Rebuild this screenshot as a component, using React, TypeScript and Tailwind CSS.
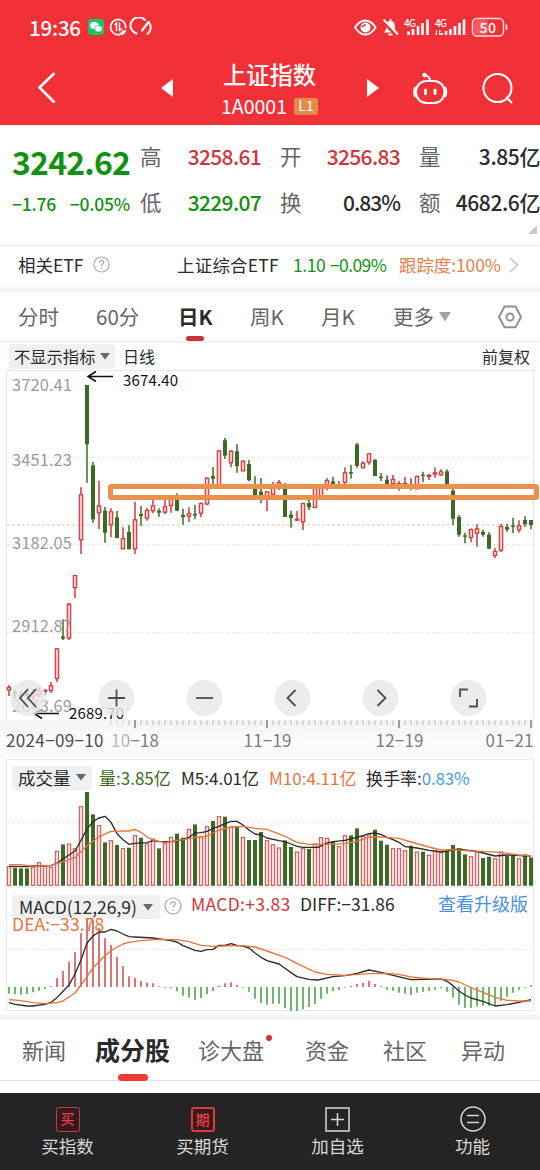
import type { ReactNode } from "react";

// [up, wickTop, bodyTop, bodyBottom, wickBottom, volume, macd]
type Candle = [number, number, number, number, number, number, number];

const candles: Candle[] = [
  [1, 685, 687, 690.5, 696, 19.3, -6.7],
  [0, 690, 692, 694, 699, 18, -7.3],
  [0, 691, 694, 696, 699, 17.3, -7.7],
  [0, 690, 693, 696, 700, 17.3, -7],
  [1, 689, 692, 697, 700, 18.7, -5.3],
  [1, 687, 690, 695, 697, 23.3, -3.7],
  [1, 689, 690, 692, 695, 20, -1.7],
  [1, 682, 685.3, 691, 693, 18.7, 0.7],
  [1, 648, 648.3, 679, 682, 34.7, 8.7],
  [0, 619.3, 636.5, 638.5, 640, 41.3, 16],
  [1, 603, 603.7, 638.7, 640, 42, 25.3],
  [1, 575, 575, 588, 598, 37.3, 35],
  [1, 487.3, 494.3, 540.3, 554, 79.3, 54],
  [0, 385, 385, 444.3, 482.7, 93.7, 71],
  [0, 461.7, 465.3, 519.3, 522.7, 71.3, 66.7],
  [1, 480.7, 505.3, 513.3, 529.3, 60.3, 59.3],
  [0, 507, 510.7, 532.7, 542.7, 43.3, 48.7],
  [1, 508.3, 511.3, 525.3, 537.3, 45.3, 42],
  [0, 511, 517.3, 538, 538.3, 40.7, 30.3],
  [1, 527.3, 538, 549.3, 549.3, 37.3, 21],
  [0, 525.3, 532, 549.3, 549.3, 38, 10.7],
  [1, 501.7, 519.3, 549.3, 554, 50.3, 9],
  [0, 506, 514, 516, 526, 48, 6],
  [1, 508, 510, 518.7, 520.7, 42, 4.3],
  [1, 498, 505.3, 511.3, 513.3, 47, 3.7],
  [0, 508.3, 510.7, 512.7, 516.7, 37.3, 0.7],
  [1, 500, 506.3, 512.7, 514, 42.3, -0.8],
  [1, 498, 499, 506, 512.7, 48.7, -1.3],
  [0, 493.3, 498, 510.7, 511.3, 52, -4.3],
  [0, 508.7, 515, 517, 524.7, 48, -8.7],
  [1, 507.3, 513, 516.7, 522, 56.7, -10.7],
  [0, 504.7, 514, 515.5, 519.3, 61.3, -12.7],
  [1, 502.5, 503, 513.7, 517.3, 49, -11.3],
  [1, 477.3, 477.7, 504.5, 505.3, 59.3, -7.3],
  [0, 467, 476, 478.7, 486, 64.7, -4.3],
  [1, 450, 450.3, 487, 487, 69.3, 1.3],
  [0, 438, 440.3, 455.7, 459, 69, 3.7],
  [1, 450.3, 450.7, 463.3, 467.3, 58.7, 4.7],
  [0, 444.3, 451.3, 466, 472.7, 58.7, 2],
  [1, 460.3, 460.7, 471.3, 471.3, 48.7, -0.7],
  [0, 460, 464, 480.3, 481.3, 45.7, -4.7],
  [0, 476.3, 484, 495.5, 495.5, 45.7, -11.7],
  [0, 478, 491.7, 496, 503.3, 53.7, -16],
  [1, 491, 491.3, 499, 511, 45.3, -17.7],
  [1, 482, 486, 494.7, 496, 41.3, -16.7],
  [1, 480, 482, 485, 490, 38, -16.7],
  [0, 483, 485, 517, 517, 45.3, -21.3],
  [0, 510.7, 514.7, 518, 527.7, 38.7, -24],
  [1, 511, 518.7, 520.3, 521, 34, -24],
  [1, 502.7, 503, 522.3, 530, 37.3, -22.3],
  [0, 500, 503, 507.3, 510, 36.7, -20],
  [1, 488, 488, 508, 508, 42, -17],
  [1, 485, 485, 497, 497, 48.3, -11.7],
  [1, 478, 480, 485, 490, 47.7, -6.7],
  [0, 476.7, 481.3, 484, 486, 44, -4.3],
  [1, 481, 486.5, 489, 489, 39.3, -3],
  [1, 467.3, 472.3, 482.7, 484, 50.3, -0.7],
  [0, 465, 472, 473.5, 478.7, 50.3, 1],
  [0, 442.7, 444.3, 466, 467.7, 57.3, 3],
  [1, 461.3, 462.7, 468.3, 468.3, 49.7, 4],
  [1, 453, 453.3, 462.7, 464.7, 51.3, 6],
  [0, 459.3, 459.7, 476, 476, 56, 3],
  [0, 473, 476.7, 478, 481, 45, 0.7],
  [0, 475.3, 479.7, 485, 485, 41, -2.7],
  [1, 475, 479, 484, 486, 37.3, -3.7],
  [1, 480.7, 483, 485, 490.7, 37.3, -5.7],
  [1, 477, 483, 485, 487, 35.3, -6.7],
  [0, 478.3, 486, 488.7, 490.3, 40, -8],
  [1, 475.5, 476, 489.3, 489.3, 34, -5.7],
  [0, 471.7, 474.7, 476, 482, 34, -4.7],
  [1, 473.7, 474.7, 477, 480, 30.7, -3.7],
  [1, 467.3, 472.3, 474.7, 477.7, 35.3, -2.7],
  [1, 469.3, 471.3, 475.3, 476, 33.3, -1.3],
  [0, 469.3, 471.3, 488.7, 489, 34.7, -4.7],
  [0, 489, 490.7, 518.7, 525, 40.7, -10.7],
  [0, 515, 517, 534.7, 536.7, 37, -17.7],
  [0, 532.7, 535.3, 536.7, 543.3, 31.3, -21],
  [1, 528.5, 529, 538, 542, 29.3, -20.7],
  [1, 524.3, 528.3, 533.7, 546.7, 34, -19.3],
  [0, 529.7, 532, 534.7, 536.7, 27.7, -18.7],
  [0, 532.3, 534.7, 548.7, 549, 29, -19],
  [1, 548, 551, 556, 558, 27.3, -18.7],
  [1, 524, 526, 550.7, 552, 34, -13.7],
  [0, 524, 527, 529.7, 531.7, 29.7, -9.7],
  [0, 517.7, 525.3, 526.7, 533, 30.7, -5.7],
  [1, 520.3, 525.3, 530.3, 532.7, 27.3, -2.7],
  [0, 516.3, 520, 524.3, 526.7, 31.3, -0.7],
  [0, 520, 520, 525, 529.3, 28.3, 1.7],
];

// line coordinates are kept at 3x, with the origin at y = 755
const volM5 =
  "27,334 81,335 99,333 153,332 171,324 189,312 225,288 243,256 261,222 279,200 297,189 315,184 333,202 351,236 369,254 387,268 405,265 441,263 459,257 477,260 513,260 531,258 549,254 567,247 585,234 603,233 621,229 639,220 657,214 675,206 693,199 711,199 729,210 747,225 765,237 783,240 801,249 837,257 855,260 873,267 891,274 909,277 954,277 981,264 999,260 1035,256 1071,247 1107,236 1125,234 1143,238 1161,247 1179,254 1197,262 1215,275 1251,279 1287,286 1323,291 1359,285 1377,282 1395,285 1431,289 1449,294 1485,303 1521,300 1557,302 1593,303";
const volM10 =
  "27,329 63,329 99,334 153,331 189,320 225,308 261,272 297,245 333,229 369,228 387,228 405,223 423,232 441,246 459,255 495,263 549,254 585,248 603,246 621,243 657,225 693,216 729,214 765,220 801,223 855,244 891,262 927,268 981,268 1035,266 1071,259 1107,246 1143,246 1197,250 1233,261 1287,276 1323,285 1359,284 1413,288 1449,289 1503,292 1557,300 1593,302";
const diff =
  "27,743 45,748 81,753 99,753 135,748 153,742 171,728 189,709 207,690 225,657 243,615 261,564 279,543 297,531 315,531 333,523 351,528 369,537 387,545 405,546 459,549 513,557 531,561 549,572 585,586 603,589 621,584 639,583 657,571 675,571 693,566 711,571 729,573 747,579 765,594 783,607 801,617 837,627 855,640 873,653 891,665 927,673 954,675 999,665 1035,662 1071,655 1107,645 1143,652 1179,661 1233,674 1323,672 1341,679 1359,692 1377,708 1395,720 1413,729 1449,739 1485,753 1521,749 1557,742 1593,734";
const dea =
  "27,734 63,737 99,743 135,746 171,743 189,738 225,714 243,690 261,665 279,639 297,620 315,602 333,587 351,576 369,567 387,562 423,557 477,553 531,554 567,560 603,571 639,574 675,573 729,572 765,576 801,588 855,607 909,634 945,651 981,658 1035,661 1107,656 1161,655 1197,658 1233,666 1287,671 1323,672 1359,676 1377,681 1413,698 1449,712 1485,727 1521,736 1557,738 1593,738";

const RED = "#cb3a3e";
const GREEN = "#3b6b23";
const cx = (i: number) => 9 + i * 6;

function Line({ points, color }: { points: string; color: string }) {
  return (
    <g transform="translate(0 755) scale(0.33333)">
      <polyline points={points} fill="none" stroke={color} strokeWidth={4} strokeLinejoin="round" />
    </g>
  );
}

function Dash({ y, color = "#e3e3e3" }: { y: number; color?: string }) {
  return <line x1={7} x2={533} y1={y} y2={y} stroke={color} strokeWidth={1} strokeDasharray="2.5 2.5" />;
}

function Help({ size }: { size: number }) {
  return (
    <svg width={size} height={size} viewBox="0 0 18 18" fill="none" stroke="#a8a8a8" strokeWidth={1.2}>
      <circle cx={9} cy={9} r={8} />
      <path d="M6.7 7.2c0-1.4 1-2.3 2.3-2.3s2.3.9 2.3 2.1c0 1.6-2.3 1.8-2.3 3.5M9 12.2v1.3" />
    </svg>
  );
}

function StatusBar() {
  return (
    <div className="flex h-[54px] items-center justify-between pr-[31px] pl-[29px] text-white">
      <div className="flex items-center">
        <span className="w-[58px] text-[20.5px] leading-[24px] font-medium tracking-[-0.2px]">19:36</span>
        <svg width={66} height={20} viewBox="87 17 66 20" fill="none" stroke="#fff" strokeWidth={1.7}>
          <rect x={88} y={19} width={16} height={16} rx={3} fill="#12c767" stroke="none" />
          <ellipse cx={94.3} cy={25.5} rx={4.3} ry={3.6} fill="#fff" stroke="none" />
          <ellipse cx={98.5} cy={28.8} rx={3.8} ry={3.2} fill="#fff" stroke="#12c767" strokeWidth={0.7} />
          <path d="M125.6 28.500a7.600 7.600 0 1 0-5.500 5.900" />
          <path d="M114.500 25l2-2v8M119.500 22.500v8l2.500-2" strokeWidth={1.5} />
          <path d="M120 35q0-5 6-5 0 5-6 5z" fill="#fff" stroke="none" />
          <path d="M136.500 33.500a8.300 8.300 0 1 1 8.500-13.500M149 22.500a8.300 8.300 0 0 1-1.500 11.500" strokeWidth={2} strokeLinecap="round" />
          <path d="M142 30.500l6.500-8.500" strokeWidth={2.2} strokeLinecap="round" />
        </svg>
      </div>
      <svg width={156} height={22} viewBox="354 16 156 22" fill="none" stroke="#fff" strokeWidth={1.8}>
        <path d="M356 27.5q4.5-7 10.3-7t10.3 7q-4.5 7-10.3 7t-10.3-7z" />
        <circle cx={366.5} cy={27.5} r={5} fill="#fff" stroke="none" />
        <path d="M362.500 26q2.500 1 4-2" stroke="#f13038" strokeWidth={1.6} />
        <path d="M385 32.5c2-2 2.2-4 2.2-6.5 0-3 1.5-5.2 4.3-5.2s4.3 2.2 4.3 5.2c0 2.5.2 4.5 2.2 6.5z" fill="#fff" stroke="none" />
        <path d="M389.5 34.5h4M391.5 19v2" />
        <path d="M383.5 21.5l14.5 14.5" stroke="#f13038" strokeWidth={3} />
        <path d="M384.500 19.500l14.500 15" />
        <path d="M409.500 31.500v3.500M414 29v6M419 26v9M423.500 23v12M428.500 19.500v15.500" strokeWidth={2.6} />
        <path d="M442.500 33v2M447 31v4M451.500 29v6M456 26v9M460.500 23v12M465 19.500v15.500" strokeWidth={2.6} />
        <path d="M437.500 30v5l-1.500-1.500M440.500 35v-5l1.500 1.500" strokeWidth={1} />
        <text x={405} y={26.500} fontSize={10} fontWeight={500} fill="#fff" stroke="none" textLength={12}>4G</text>
        <text x={436} y={26.500} fontSize={10} fontWeight={500} fill="#fff" stroke="none" textLength={12}>4G</text>
        <rect x={473.500} y={18.500} width={31} height={17.500} rx={4.500} strokeWidth={1.4} strokeOpacity={0.85} />
        <rect x={475} y={20} width={14} height={14.500} rx={3} fill="#fff" fillOpacity={0.2} stroke="none" />
        <path d="M507.500 24.500v5.500" strokeWidth={1.6} />
        <text x={480.500} y={32.500} fontSize={14} fontWeight={500} fill="#fff" stroke="none" textLength={16.500}>50</text>
      </svg>
    </div>
  );
}

function TitleBar() {
  return (
    <div className="flex h-[71px] items-start justify-between pr-[24px] pl-[35px] text-white">
      <svg className="mt-[17px]" width={22} height={34} viewBox="0 0 22 34" fill="none" stroke="#fff" strokeWidth={2.6}>
        <path d="M19.500 2L4.500 16.500 19.500 31.500" />
      </svg>
      <div className="ml-[70px] flex w-[218px] justify-between">
        <svg className="mt-[25px]" width={12} height={19} viewBox="0 0 12 19" fill="#fff">
          <path d="M12 0v18L0 9z" />
        </svg>
        <div className="flex flex-col items-center">
          <h1 className="mt-[6px] text-[23.3px] leading-[28px] font-medium">上证指数</h1>
          <div className="flex items-center gap-[7px] pt-[8px]">
            <span className="text-[19.5px] leading-[20px]">1A0001</span>
            <span className="h-[17px] w-[24px] rounded-[2px] bg-[#e08c4a] text-center text-[14px] leading-[15px]">L1</span>
          </div>
        </div>
        <svg className="mt-[25px]" width={12} height={19} viewBox="0 0 12 19" fill="#fff">
          <path d="M0 0v18l12-9z" />
        </svg>
      </div>
      <div className="flex gap-[33px] pt-[16px]">
        <svg width={36} height={36} viewBox="412 70 36 36" fill="none" stroke="#fff" strokeWidth={2.1}>
          <rect x={416} y={81} width={28.500} height={22} rx={10.500} />
          <path d="M415.500 87q-2.500 5 0 10M445 87q2.500 5 0 10M430 81q0-5-5-5.500" />
          <circle cx={424.500} cy={75} r={2.2} fill="#fff" stroke="none" />
          <path d="M425.500 90v3.500M435 90v3.500" strokeWidth={3} strokeLinecap="round" />
        </svg>
        <svg width={35} height={36} viewBox="481 70 35 36" fill="none" stroke="#fff" strokeWidth={2.1}>
          <circle cx={497.500} cy={88} r={14} />
          <path d="M506 97l6 6" />
        </svg>
      </div>
    </div>
  );
}

const quotes = [
  { label: "高", value: "3258.61", cls: "text-[#cf3639] tracking-[-0.7px]" },
  { label: "开", value: "3256.83", cls: "text-[#cf3639] tracking-[-0.7px]" },
  { label: "量", value: "3.85亿", cls: "text-[#2b2b2b] tracking-[-0.4px]" },
  { label: "低", value: "3229.07", cls: "text-[#119211] tracking-[-0.7px]" },
  { label: "换", value: "0.83%", cls: "text-[#2b2b2b] tracking-[-1px]" },
  { label: "额", value: "4682.6亿", cls: "text-[#2b2b2b] tracking-[-0.4px]" },
];

function Quote() {
  return (
    <section className="flex h-[121px] border-b border-[#ebebeb] bg-white">
      <div className="w-[140px] pl-[12px] text-[#119211]">
        <div className="mt-[18px] text-[32px] leading-[36px] font-bold tracking-[-0.8px]">3242.62</div>
        <div className="mt-[15px] flex justify-between pr-[10px] text-[17.5px] leading-[20px] font-medium tracking-[-0.2px]">
          <span>−1.76</span>
          <span>−0.05%</span>
        </div>
      </div>
      <div className="flex-1">
        <div className="grid grid-cols-[121px_139px_140px] gap-y-[22px] pt-[19px]">
          {quotes.map((q, i) => (
            <div key={q.label} className={i % 3 === 0 ? "flex justify-between" : "flex justify-between pl-[19px]"}>
              <span className="text-[21.5px] leading-[24px] text-[#666]">{q.label}</span>
              <span className={`text-[21px] leading-[24px] font-medium ${q.cls}`}>{q.value}</span>
            </div>
          ))}
        </div>
        <svg className="mt-[11px] mr-[3px] ml-auto" width={9} height={9} viewBox="0 0 9 9">
          <path d="M9 0v9H0z" fill="#c9c9c9" />
        </svg>
      </div>
    </section>
  );
}

function EtfRow() {
  return (
    <section className="flex h-[41px] items-center bg-white pb-[4px] pl-[18px] text-[17.5px] leading-[24px] text-[#2b2b2b]">
      <span className="w-[75px]">相关ETF</span>
      <div className="w-[84px]">
        <Help size={17} />
      </div>
      <span className="w-[116px] tracking-[0.2px]">上证综合ETF</span>
      <span className="w-[37px] tracking-[-0.4px] text-[#119211]">1.10</span>
      <span className="w-[69px] tracking-[-0.6px] text-[#119211]">−0.09%</span>
      <span className="w-[110px] tracking-[-0.1px] text-[#e8804a]">跟踪度:100%</span>
      <svg width={10} height={16} viewBox="0 0 10 16" fill="none" stroke="#c4c4c4" strokeWidth={1.6}>
        <path d="M1 1l7.5 7L1 15" />
      </svg>
    </section>
  );
}

function PeriodTabs() {
  return (
    <nav className="flex h-[49px] border-b border-[#ebebeb] bg-white pt-[11px] pl-[18px] text-[20.5px] leading-[24px] text-[#666]">
      <span className="w-[78px]">分时</span>
      <span className="w-[82px]">60分</span>
      <div className="flex w-[72px] flex-col">
        <span className="font-bold text-[#2b2b2b]">日K</span>
        <i className="mt-[8px] ml-[8px] h-[5px] w-[18px] rounded-full bg-[#cc3338]" />
      </div>
      <span className="w-[71px]">周K</span>
      <span className="w-[72px]">月K</span>
      <span className="w-[46px]">更多</span>
      <svg className="mt-[8px]" width={12} height={10} viewBox="0 0 12 10" fill="#a3a3a3">
        <path d="M0 0h12L6 9.500z" />
      </svg>
      <svg className="ml-[46px]" width={26} height={26} viewBox="0 0 26 26" fill="none" stroke="#929292" strokeWidth={2}>
        <path d="M7.500 2.500h11L24 13l-5.500 10.300h-11L2 13z" strokeLinejoin="round" />
        <circle cx={13} cy={13} r={3.6} />
      </svg>
    </nav>
  );
}

function Chip({ children, className }: { children: ReactNode; className: string }) {
  return (
    <div className={`flex items-center justify-between rounded-[3px] bg-[#f0f0f0] ${className}`}>
      {children}
      <svg width={10} height={7} viewBox="0 0 10 7" fill="#666">
        <path d="M0 0h10L5 6.500z" />
      </svg>
    </div>
  );
}

const priceLabels = [
  { y: 391, text: "3720.41" },
  { y: 466, text: "3451.23" },
  { y: 549, text: "3182.05" },
  { y: 632, text: "2912.87" },
  { y: 711.5, text: "2643.69" },
];

function RoundButton({ x, d }: { x: number; d: string }) {
  return (
    <g>
      <circle cx={x} cy={698} r={18} fill="#e8e8e8" fillOpacity={0.82} />
      <path d={d} transform={`translate(${x} 698)`} fill="none" stroke="#4d4d4d" strokeWidth={1.8} />
    </g>
  );
}

function PriceChart() {
  return (
    <svg className="block" width={540} height={390} viewBox="0 370 540 390">
      <defs>
        <linearGradient id="axis" x1="0" y1="0" x2="0" y2="1">
          <stop offset="0" stopColor="#f3f3f3" />
          <stop offset="0.5" stopColor="#fbfbfb" />
          <stop offset="1" stopColor="#fafafa" />
        </linearGradient>
        <linearGradient id="fade" x1="0" y1="0" x2="1" y2="0">
          <stop offset="0" stopColor="#fbfbfb" />
          <stop offset="0.8" stopColor="#fbfbfb" stopOpacity={0.9} />
          <stop offset="1" stopColor="#fbfbfb" stopOpacity={0} />
        </linearGradient>
      </defs>
      <path d="M6.500 719.500V370.500H533.500V719.500" fill="none" stroke="#e8e8e8" />
      <Dash y={457.5} />
      <Dash y={544.5} />
      <Dash y={632.5} />
      <Dash y={525} color="#cfc3a4" />
      <g>
        {candles.map(([up, high, top, bottom, low], i) => (
          <g key={i}>
            <line x1={cx(i)} x2={cx(i)} y1={high} y2={low} stroke={up ? RED : GREEN} strokeWidth={1.5} />
            {up ? (
              <rect x={cx(i) - 1.7} y={top + 0.5} width={3.4} height={Math.max(bottom - top - 1, 1)} fill="#fbc6c6" stroke={RED} strokeWidth={1.2} />
            ) : (
              <rect x={cx(i) - 2} y={top} width={4} height={bottom - top} fill={GREEN} />
            )}
          </g>
        ))}
      </g>

      <rect x={0} y={720} width={534} height={40} fill="url(#axis)" />
      <g stroke="#b5b5b5" strokeWidth={1}>
        {candles.map((_, i) =>
          i > 16 && (i - 21) % 22 !== 0 ? (
            <line key={i} x1={cx(i)} x2={cx(i)} y1={720.5} y2={725} strokeOpacity={i < 20 ? 0.5 : 1} />
          ) : null
        )}
      </g>
      <path d="M135 720v8M267 720v8M399 720v8M531 720v8" stroke="#7d7d7d" strokeWidth={1.5} />

      <g fill="#9b9b9b" fontSize={16.5}>
        {priceLabels.map((l) => (
          <text key={l.text} x={12} y={l.y} textLength={60}>{l.text}</text>
        ))}
      </g>
      <g fill="#111" fontSize={15}>
        <text x={123} y={385.5} textLength={55}>3674.40</text>
        <text x={69} y={718.5} textLength={55}>2689.70</text>
      </g>
      <g fill="none" stroke="#111" strokeWidth={1.5}>
        <path d="M113 376.500H88M96 371.500L88 376.500 96 381.500" />
        <path d="M59 713.500H34M42 709.500L34 713.500 42 718.500" />
      </g>

      <g fill="#7d7d7d" fontSize={17}>
        <text x={111} y={747} textLength={48}>10−18</text>
        <rect x={100} y={728} width={34} height={26} fill="url(#fade)" fillOpacity={0.5} />
        <text x={243.5} y={747} textLength={48}>11−19</text>
        <text x={375.5} y={747} textLength={48}>12−19</text>
        <text x={485.5} y={747} textLength={48}>01−21</text>
        <text x={6} y={747} textLength={97.5} fill="#4d4d4d">2024−09−10</text>
      </g>
      <line x1={6} x2={534} y1={759.5} y2={759.5} stroke="#ebebeb" />

      <RoundButton x={28} d="M0 -9L-8 0L0 9M8 -9L0 0L8 9" />
      <RoundButton x={116.5} d="M-8.500 0H8.500M0 -8.500V8.500" />
      <RoundButton x={204.5} d="M-8.500 0H8.500" />
      <RoundButton x={292.5} d="M3 -8L-5 0L3 8" />
      <RoundButton x={380.5} d="M-3 -8L5 0L-3 8" />
      <RoundButton x={468.5} d="M-8.500 -1V-8.500H-0.500M8.500 1V8.500H0.500" />

      <rect x={110.5} y={486.5} width={426} height={11} rx={1} fill="none" stroke="#e9924f" strokeWidth={5} />
    </svg>
  );
}

function VolumePanel() {
  return (
    <section className="relative h-[128px]">
      <svg className="absolute inset-0" width={540} height={128} viewBox="0 760 540 128">
        <path d="M6.500 760V888M533.500 760V888" stroke="#e8e8e8" />
        <Dash y={822.5} />
        {candles.map(([up, , , , , vol], i) =>
          up ? (
            <rect key={i} x={cx(i) - 1.7} y={886 - vol} width={3.4} height={vol - 0.7} fill="#fbdcdc" stroke="#bf4a4e" strokeWidth={1} />
          ) : (
            <rect key={i} x={cx(i) - 2} y={885.7 - vol} width={4} height={vol} fill={GREEN} />
          )
        )}
        <Line points={volM5} color="#2b2b2b" />
        <Line points={volM10} color="#e8743c" />
        <line x1={6} x2={534} y1={887.5} y2={887.5} stroke="#f0f0f0" />
      </svg>
      <div className="relative flex h-[35px] items-center pl-[12px] text-[17px] leading-[22px] text-[#2b2b2b]">
        <Chip className="h-[24px] w-[80px] pr-[6px] pl-[6px] text-[17.5px]">成交量</Chip>
        <span className="ml-[7px] w-[82px] text-[#3b6b23]">量:3.85亿</span>
        <span className="w-[88px]">M5:4.01亿</span>
        <span className="w-[97px] text-[#e8743c]">M10:4.11亿</span>
        <span>换手率:</span>
        <span className="tracking-[-0.2px] text-[#3f9fe0]">0.83%</span>
      </div>
    </section>
  );
}

function MacdPanel() {
  return (
    <section className="relative h-[127px]">
      <svg className="absolute inset-0" width={540} height={127} viewBox="0 888 540 127">
        <path d="M6.500 888V1010.500H533.500V888" fill="none" stroke="#e8e8e8" />
        <Dash y={949.5} />
        {candles.map(([, , , , , , m], i) => (
          <line key={i} x1={cx(i)} x2={cx(i)} y1={987} y2={987 - m} stroke={m > 0 ? RED : "#2f9a2f"} strokeWidth={1.4} />
        ))}
        <Line points={diff} color="#2b2b2b" />
        <Line points={dea} color="#e8743c" />
      </svg>
      <div className="relative flex h-[30px] pt-[7px] pl-[12px] text-[17.5px] leading-[18px] text-[#2b2b2b]">
        <Chip className="h-[24px] w-[148px] pr-[7px] pl-[7px]">MACD(12,26,9)</Chip>
        <div className="mt-[2px] ml-[4px] w-[27px]">
          <Help size={18} />
        </div>
        <span className="w-[109px] tracking-[0.3px] text-[#cf3639]">MACD:+3.83</span>
        <span className="w-[138px]">DIFF:−31.86</span>
        <span className="-mt-px text-[18px] text-[#4a8fe0]">查看升级版</span>
      </div>
      <div className="relative pl-[12px] text-[17.5px] leading-[12px] tracking-[0.1px] text-[#e8743c]">DEA:−33.78</div>
    </section>
  );
}

function ContentTabs() {
  return (
    <nav className="flex h-[61px] border-b border-[#e0e0e0] bg-white pt-[16px] pl-[22px] text-[22px] leading-[26px] text-[#666]">
      <span className="w-[73px]">新闻</span>
      <div className="flex w-[103px] flex-col">
        <span className="text-[25px] font-bold text-[#2b2b2b]">成分股</span>
        <i className="mt-[12px] ml-[23px] h-[7px] w-[30px] shrink-0 rounded-full bg-[#f03a35]" />
      </div>
      <div className="flex w-[107px] items-start">
        <span>诊大盘</span>
        <i className="-mt-px ml-[2px] h-[6px] w-[6px] rounded-full bg-[#cc3338]" />
      </div>
      <span className="w-[78px]">资金</span>
      <span className="w-[78px]">社区</span>
      <span>异动</span>
    </nav>
  );
}

const actions = [
  {
    label: "买指数",
    icon: (
      <span className="h-[25px] w-[24px] rounded-[3px] border-[1.5px] border-[#c9383c] bg-[#331c1d] text-center text-[14px] leading-[21px] font-medium text-[#f03a45]">
        买
      </span>
    ),
  },
  {
    label: "买期货",
    icon: (
      <span className="h-[25px] w-[24px] rounded-[3px] border-2 border-[#d93a3e] bg-[#331c1d] text-center text-[14px] leading-[20px] font-medium text-[#f0403f]">
        期
      </span>
    ),
  },
  {
    label: "加自选",
    icon: (
      <svg width={25} height={25} viewBox="0 0 25 25" fill="none" stroke="#d8d8d8" strokeWidth={1.5}>
        <path d="M1 1h23v23H1zM6 12.500h13M12.500 6v13" />
      </svg>
    ),
  },
  {
    label: "功能",
    icon: (
      <svg width={26} height={26} viewBox="0 0 26 26" fill="none" stroke="#d8d8d8" strokeWidth={1.5}>
        <circle cx={13} cy={13} r={12} />
        <path d="M7 9.500h12M7 16.500h12" />
      </svg>
    ),
  },
];

export default function App() {
  return (
    <div className="flex h-[1170px] w-[540px] flex-col overflow-hidden bg-white font-['Noto_Sans_CJK_SC',sans-serif] whitespace-nowrap">
      <header className="h-[125px] bg-[#f13038]">
        <StatusBar />
        <TitleBar />
      </header>
      <Quote />
      <EtfRow />
      <div className="h-[6px] bg-[#f4f4f4]" />
      <PeriodTabs />
      <div className="flex h-[28px] items-center pr-[10px] pl-[9px] text-[16px] leading-[22px] text-[#2b2b2b]">
        <Chip className="h-[25px] w-[106px] pr-[5px] pl-[5px] text-[16.3px]">不显示指标</Chip>
        <span className="ml-[8px]">日线</span>
        <span className="ml-auto">前复权</span>
      </div>
      <PriceChart />
      <VolumePanel />
      <MacdPanel />
      <div className="h-[5px] bg-[#f4f4f4]" />
      <ContentTabs />
      <div className="h-[12px]" />
      <footer className="grid flex-1 grid-cols-4 bg-[#242424] pt-[13px] text-[17.5px] text-[#d8d8d8]">
        {actions.map((a) => (
          <div key={a.label} className="flex flex-col items-center">
            <div className="flex h-[26px] items-center">{a.icon}</div>
            <span className="mt-[3px] leading-[22px]">{a.label}</span>
          </div>
        ))}
      </footer>
    </div>
  );
}
